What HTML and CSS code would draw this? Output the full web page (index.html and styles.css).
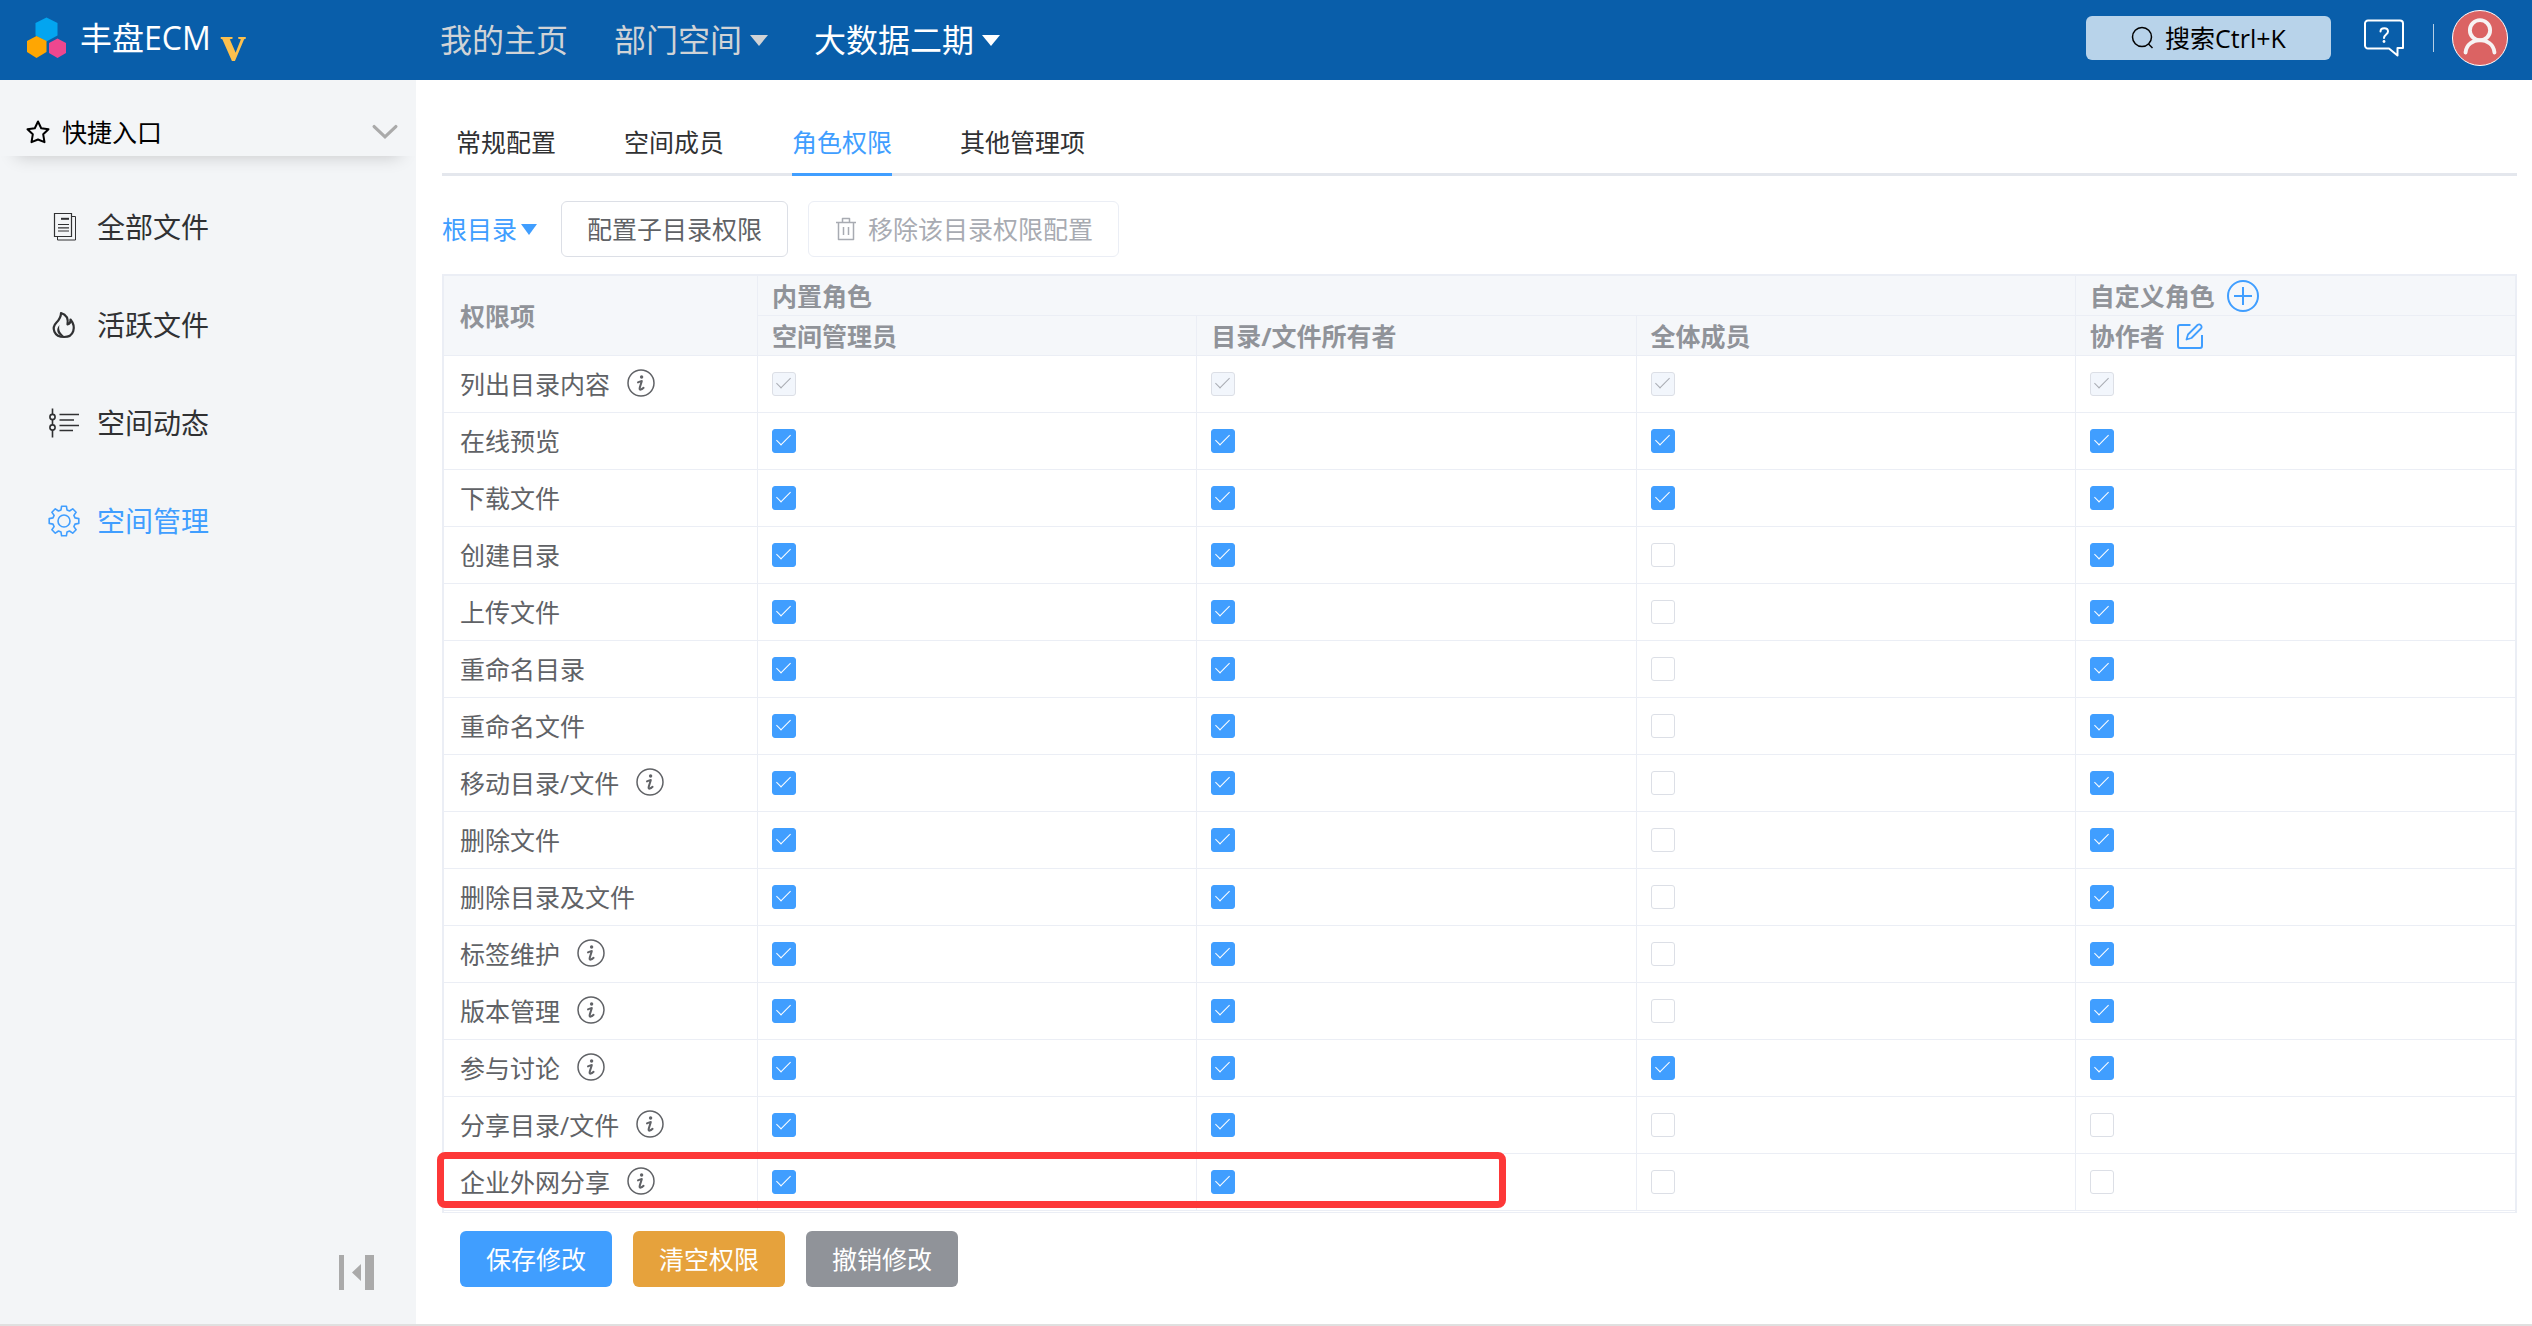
FILE: index.html
```html
<!DOCTYPE html>
<html lang="zh-CN">
<head>
  <meta charset="utf-8" />
  <meta name="viewport" content="width=device-width, initial-scale=1" />
  <title>丰盘ECM</title>
  <link rel="stylesheet" href="styles.css">
</head>

<body>
  <svg class="sprite" aria-hidden="true">
    <symbol id="i-info" viewBox="0 0 28 28">
      <circle cx="14" cy="14" r="13" fill="none" stroke="currentColor" stroke-width="1.5" />
      <circle cx="14.6" cy="8" r="1.7" fill="currentColor" />
      <path d="M11 13.4c1.6-.8 2.8-1.4 3.800-1.400-.4 2-2 5.400-2.200 7.600-.1 1.800 1.800 1.200 4-.8" fill="none" stroke="currentColor" stroke-width="2" stroke-linecap="round" stroke-linejoin="round" />
    </symbol>
  </svg>

  <header class="header">
    <a class="brand" href="#">
      <svg class="logo" viewBox="0 0 40 42" aria-hidden="true">
        <path fill="#03a5f0" d="M19.5.5l11 5.500v12.500l-11 6-11-6V6z" />
        <path fill="#ffa602" d="M9.500 19l10 5v11l-10 6L0 35V24z" />
        <path fill="#ee478f" d="M30.500 21.500L39 26v10l-8.500 5-8.500-5V26z" />
      </svg>
      <span>丰盘ECM</span>
      <span class="brand-v">v</span>
    </a>

    <nav class="top-nav">
      <a href="#">我的主页</a>
      <a href="#">部门空间<i class="caret"></i></a>
      <a class="active" href="#">大数据二期<i class="caret"></i></a>
    </nav>

    <div class="header-right">
      <button class="search" type="button">
        <svg viewBox="0 0 24 24" aria-hidden="true"><g fill="none" stroke="currentColor" stroke-width="1.5"><circle cx="11" cy="11" r="9.500" /><path d="M17.500 18l4 4" /></g></svg>
        <span>搜索Ctrl+K</span>
      </button>
      <button class="help" type="button" aria-label="帮助">
        <svg viewBox="0 0 40 38"><g fill="none" stroke="#fff" stroke-width="2" stroke-linejoin="round" stroke-linecap="round"><path d="M4 1.500h32a3 3 0 0 1 3 3V29h-5.500v7.500L25 29.500H4a3 3 0 0 1-3-3v-22a3 3 0 0 1 3-3z" /><path d="M16.500 12.500c0-4.500 7.500-4.500 7.500 0 0 3-4 3-4 6.500" /></g><circle cx="20" cy="22.500" r="1.400" fill="#fff" /></svg>
      </button>
      <span class="divider"></span>
      <button class="avatar" type="button" aria-label="账户">
        <svg viewBox="0 0 56 56"><g fill="none" stroke="#f7f3f3" stroke-width="4" stroke-linecap="round"><circle cx="28" cy="20" r="10.500" /><path d="M13 43c1.500-17 28.500-17 30 0" /></g></svg>
      </button>
    </div>
  </header>

  <div class="layout">
    <aside class="sidebar">
      <button class="quick" type="button">
        <svg class="star" viewBox="0 0 24 24" aria-hidden="true"><path d="m12 1.500 3.200 6.700 7.300 1-5.300 5.100 1.300 7.900-6.500-2.700-6.500 2.700 1.300-7.900L1.500 9.200l7.300-1z" fill="none" stroke="currentColor" stroke-width="2" stroke-linejoin="round" /></svg>
        <span>快捷入口</span>
        <svg class="chevron" viewBox="0 0 24 14" aria-hidden="true"><path d="m2 2 10 9.500L22 2" fill="none" stroke="currentColor" stroke-width="3" stroke-linecap="round" /></svg>
      </button>

      <nav class="side-nav">
        <a href="#">
          <svg viewBox="0 0 32 32" aria-hidden="true"><g fill="none" stroke="currentColor"><path d="M6.500 2.500h17v23h-17z" stroke-width="1.200" /><path d="M24 5.500h3.500V29h-18v-3" /><path d="M10 13.500h11M10 16.800h11M10 20h11" stroke-width="1.200" /><path d="M13 7.800h8" stroke-width="2" /></g></svg>
          <span>全部文件</span>
        </a>
        <a href="#">
          <svg viewBox="0 0 32 32" aria-hidden="true"><path d="M13 4c5 1.500 7.500 5.500 6.500 11.500 2-.5 3.200-2.200 3-5 6 7.500 3.500 17.500-6.500 17.500S3 19 8.500 13.500C11.500 10.500 13 8 13 4z" fill="none" stroke="currentColor" stroke-width="2.200" stroke-linejoin="round" /><path d="M11.500 16c-1.500 5 1.500 9 5 11.500-6 0-10-6-5-11.500z" fill="currentColor" /></svg>
          <span>活跃文件</span>
        </a>
        <a href="#">
          <svg viewBox="0 0 32 32" aria-hidden="true"><g fill="none" stroke="currentColor" stroke-width="1.600"><path d="M4.500 1.500v6M4.500 12.500v5.500M4.500 23v7.500" /><circle cx="4.500" cy="10" r="2.600" /><circle cx="4.500" cy="20.500" r="2.600" /><path d="M11.500 7.500H31M11.500 13H26M11.500 18.500H31M11.500 23.500H25" /></g></svg>
          <span>空间动态</span>
        </a>
        <a class="active" href="#">
          <svg viewBox="0 0 32 32" aria-hidden="true"><g fill="none" stroke="currentColor" stroke-width="1.600" stroke-linejoin="round"><circle cx="16" cy="16" r="6" /><path d="M13.600 1.200h4.800l.6 3.700 2.500 1.100 3.200-2.200 3.400 3.400-2.200 3.200 1.100 2.500 3.800.7v4.800l-3.800.7-1.100 2.500 2.200 3.200-3.400 3.400-3.200-2.200-2.500 1.100-.6 3.700h-4.800l-.6-3.700-2.500-1.100-3.200 2.200-3.400-3.400 2.200-3.200-1.100-2.500-3.800-.7v-4.800l3.800-.7 1.100-2.500-2.200-3.200 3.400-3.400 3.200 2.200 2.500-1.100z" /></g></svg>
          <span>空间管理</span>
        </a>
      </nav>

      <button class="collapse" type="button" aria-label="收起侧栏">
        <svg viewBox="0 0 36 36"><path fill="currentColor" d="M0 0h5v35H0zM26 0h9v35h-9zM22 9v17l-9-8.500z" /></svg>
      </button>
    </aside>

    <main class="content">
      <nav class="tabs">
        <a href="#">常规配置</a>
        <a href="#">空间成员</a>
        <a class="active" href="#">角色权限</a>
        <a href="#">其他管理项</a>
      </nav>

      <div class="toolbar">
        <a class="root-link" href="#">根目录<i class="caret"></i></a>
        <button class="btn" type="button">配置子目录权限</button>
        <button class="btn" type="button" disabled>
          <svg viewBox="0 0 24 24" aria-hidden="true"><path d="M2 5.500h20M8.500 5V1.500h7V5M4.500 5.500v17h15v-17M9.500 10v8M14.500 10v8" fill="none" stroke="currentColor" stroke-width="1.500" stroke-linejoin="round" /></svg>
          <span>移除该目录权限配置</span>
        </button>
      </div>

      <div class="table-wrap">
        <table class="perm-table">
          <thead>
            <tr>
              <th class="name-col" rowspan="2">权限项</th>
              <th colspan="3">内置角色</th>
              <th>
                <div class="th-row">自定义角色
                  <button class="icon-btn" type="button" aria-label="新增角色"><svg class="add" viewBox="0 0 32 32"><path d="M16 7v18M7 16h18M31 16a15 15 0 1 1-30 0 15 15 0 0 1 30 0z" fill="none" stroke="currentColor" stroke-width="2" /></svg></button>
                </div>
              </th>
            </tr>
            <tr>
              <th>空间管理员</th>
              <th>目录/文件所有者</th>
              <th>全体成员</th>
              <th>
                <div class="th-row">协作者
                  <button class="icon-btn" type="button" aria-label="编辑角色"><svg viewBox="0 0 26 26"><g fill="none" stroke="currentColor" stroke-width="2" stroke-linejoin="round"><path d="M13.500 2H3a2 2 0 0 0-2 2v19a2 2 0 0 0 2 2h20a2 2 0 0 0 2-2V12" /><path d="m9.500 16.500 1.500-5L20.500 2A2.500 2.500 0 0 1 24 5.500L14.500 15z" stroke-width="1.800" /></g></svg></button>
                </div>
              </th>
            </tr>
          </thead>
          <tbody>
            <tr>
              <td>列出目录内容<svg class="info"><use href="#i-info" /></svg></td>
              <td><input type="checkbox" aria-label="空间管理员 列出目录内容" checked disabled></td>
              <td><input type="checkbox" aria-label="所有者 列出目录内容" checked disabled></td>
              <td><input type="checkbox" aria-label="全体成员 列出目录内容" checked disabled></td>
              <td><input type="checkbox" aria-label="协作者 列出目录内容" checked disabled></td>
            </tr>
            <tr>
              <td>在线预览</td>
              <td><input type="checkbox" aria-label="空间管理员 在线预览" checked></td>
              <td><input type="checkbox" aria-label="所有者 在线预览" checked></td>
              <td><input type="checkbox" aria-label="全体成员 在线预览" checked></td>
              <td><input type="checkbox" aria-label="协作者 在线预览" checked></td>
            </tr>
            <tr>
              <td>下载文件</td>
              <td><input type="checkbox" aria-label="空间管理员 下载文件" checked></td>
              <td><input type="checkbox" aria-label="所有者 下载文件" checked></td>
              <td><input type="checkbox" aria-label="全体成员 下载文件" checked></td>
              <td><input type="checkbox" aria-label="协作者 下载文件" checked></td>
            </tr>
            <tr>
              <td>创建目录</td>
              <td><input type="checkbox" aria-label="空间管理员 创建目录" checked></td>
              <td><input type="checkbox" aria-label="所有者 创建目录" checked></td>
              <td><input type="checkbox" aria-label="全体成员 创建目录"></td>
              <td><input type="checkbox" aria-label="协作者 创建目录" checked></td>
            </tr>
            <tr>
              <td>上传文件</td>
              <td><input type="checkbox" aria-label="空间管理员 上传文件" checked></td>
              <td><input type="checkbox" aria-label="所有者 上传文件" checked></td>
              <td><input type="checkbox" aria-label="全体成员 上传文件"></td>
              <td><input type="checkbox" aria-label="协作者 上传文件" checked></td>
            </tr>
            <tr>
              <td>重命名目录</td>
              <td><input type="checkbox" aria-label="空间管理员 重命名目录" checked></td>
              <td><input type="checkbox" aria-label="所有者 重命名目录" checked></td>
              <td><input type="checkbox" aria-label="全体成员 重命名目录"></td>
              <td><input type="checkbox" aria-label="协作者 重命名目录" checked></td>
            </tr>
            <tr>
              <td>重命名文件</td>
              <td><input type="checkbox" aria-label="空间管理员 重命名文件" checked></td>
              <td><input type="checkbox" aria-label="所有者 重命名文件" checked></td>
              <td><input type="checkbox" aria-label="全体成员 重命名文件"></td>
              <td><input type="checkbox" aria-label="协作者 重命名文件" checked></td>
            </tr>
            <tr>
              <td>移动目录/文件<svg class="info"><use href="#i-info" /></svg></td>
              <td><input type="checkbox" aria-label="空间管理员 移动目录/文件" checked></td>
              <td><input type="checkbox" aria-label="所有者 移动目录/文件" checked></td>
              <td><input type="checkbox" aria-label="全体成员 移动目录/文件"></td>
              <td><input type="checkbox" aria-label="协作者 移动目录/文件" checked></td>
            </tr>
            <tr>
              <td>删除文件</td>
              <td><input type="checkbox" aria-label="空间管理员 删除文件" checked></td>
              <td><input type="checkbox" aria-label="所有者 删除文件" checked></td>
              <td><input type="checkbox" aria-label="全体成员 删除文件"></td>
              <td><input type="checkbox" aria-label="协作者 删除文件" checked></td>
            </tr>
            <tr>
              <td>删除目录及文件</td>
              <td><input type="checkbox" aria-label="空间管理员 删除目录及文件" checked></td>
              <td><input type="checkbox" aria-label="所有者 删除目录及文件" checked></td>
              <td><input type="checkbox" aria-label="全体成员 删除目录及文件"></td>
              <td><input type="checkbox" aria-label="协作者 删除目录及文件" checked></td>
            </tr>
            <tr>
              <td>标签维护<svg class="info"><use href="#i-info" /></svg></td>
              <td><input type="checkbox" aria-label="空间管理员 标签维护" checked></td>
              <td><input type="checkbox" aria-label="所有者 标签维护" checked></td>
              <td><input type="checkbox" aria-label="全体成员 标签维护"></td>
              <td><input type="checkbox" aria-label="协作者 标签维护" checked></td>
            </tr>
            <tr>
              <td>版本管理<svg class="info"><use href="#i-info" /></svg></td>
              <td><input type="checkbox" aria-label="空间管理员 版本管理" checked></td>
              <td><input type="checkbox" aria-label="所有者 版本管理" checked></td>
              <td><input type="checkbox" aria-label="全体成员 版本管理"></td>
              <td><input type="checkbox" aria-label="协作者 版本管理" checked></td>
            </tr>
            <tr>
              <td>参与讨论<svg class="info"><use href="#i-info" /></svg></td>
              <td><input type="checkbox" aria-label="空间管理员 参与讨论" checked></td>
              <td><input type="checkbox" aria-label="所有者 参与讨论" checked></td>
              <td><input type="checkbox" aria-label="全体成员 参与讨论" checked></td>
              <td><input type="checkbox" aria-label="协作者 参与讨论" checked></td>
            </tr>
            <tr>
              <td>分享目录/文件<svg class="info"><use href="#i-info" /></svg></td>
              <td><input type="checkbox" aria-label="空间管理员 分享目录/文件" checked></td>
              <td><input type="checkbox" aria-label="所有者 分享目录/文件" checked></td>
              <td><input type="checkbox" aria-label="全体成员 分享目录/文件"></td>
              <td><input type="checkbox" aria-label="协作者 分享目录/文件"></td>
            </tr>
            <tr>
              <td>企业外网分享<svg class="info"><use href="#i-info" /></svg></td>
              <td><input type="checkbox" aria-label="空间管理员 企业外网分享" checked></td>
              <td><input type="checkbox" aria-label="所有者 企业外网分享" checked></td>
              <td><input type="checkbox" aria-label="全体成员 企业外网分享"></td>
              <td><input type="checkbox" aria-label="协作者 企业外网分享"></td>
            </tr>
          </tbody>
        </table>
        <div class="highlight"></div>
      </div>

      <div class="actions">
        <button class="btn primary" type="button">保存修改</button>
        <button class="btn warning" type="button">清空权限</button>
        <button class="btn info-btn" type="button">撤销修改</button>
      </div>
    </main>
  </div>
</body>
</html>
```

FILE: styles.css
```css
* {
  box-sizing: border-box;
}

body {
  margin: 0;
  min-height: 100vh;
  display: flex;
  flex-direction: column;
  border-bottom: 2px solid #e0e0e0;
  background: #fff;
  color: #303133;
  font-family: "Open Sans", "Noto Sans CJK SC", sans-serif;
  font-size: 25px;
  line-height: 36px;
}

a {
  color: inherit;
  text-decoration: none;
}

button {
  margin: 0;
  padding: 0;
  border: 0;
  background: none;
  color: inherit;
  font: inherit;
  cursor: pointer;
}

svg {
  display: block;
  flex: none;
}

.sprite {
  display: none;
}

.caret {
  display: inline-block;
  border: 8px solid transparent;
  border-top: 11px solid currentColor;
  border-bottom: 0;
}

/* header */
.header {
  display: flex;
  align-items: center;
  height: 80px;
  padding: 0 24px 4px 27px;
  background: #095eaa;
  color: #fff;
  font-size: 32px;
}

.brand {
  display: flex;
  align-items: center;
  width: 413px;
}

.logo {
  width: 40px;
  height: 42px;
  margin-right: 13px;
}

.brand-v {
  margin-left: 10px;
  padding-top: 10px;
  color: #fdc04e;
  font-family: "Liberation Serif", serif;
  font-size: 50px;
  font-weight: bold;
}

.top-nav {
  display: flex;
  gap: 46px;
  padding-top: 4px;
  color: #d0d3d6;
}

.top-nav a {
  display: flex;
  align-items: center;
  gap: 8px;
}

.top-nav .caret {
  border-width: 11px 9px 0;
}

.top-nav .active {
  color: #fff;
}

.header-right {
  display: flex;
  align-items: center;
  margin-left: auto;
  font-size: 25px;
}

.search {
  display: flex;
  align-items: center;
  justify-content: center;
  gap: 10px;
  width: 245px;
  height: 44px;
  border-radius: 6px;
  background: #b8d3ea;
  color: #000;
}

.search svg {
  width: 24px;
  height: 24px;
}

.help {
  margin: 0 29px 0 33px;
}

.help svg {
  width: 40px;
  height: 38px;
}

.divider {
  width: 1px;
  height: 28px;
  margin-right: 18px;
  background: #b5cee5;
}

.avatar {
  width: 56px;
  height: 56px;
  border: 1px solid #fff;
  border-radius: 50%;
  background: #db6363;
}

/* sidebar */
.layout {
  display: flex;
  flex: 1;
}

.sidebar {
  display: flex;
  flex-direction: column;
  width: 416px;
  flex: none;
  background: #f3f5f7;
}

.quick {
  display: flex;
  align-items: center;
  height: 76px;
  padding: 28px 18px 0 26px;
  color: #000;
  box-shadow: 0 16px 18px -16px rgba(0, 0, 0, 0.2);
}

.star {
  width: 24px;
  height: 24px;
  margin-right: 12px;
}

.chevron {
  width: 26px;
  height: 16px;
  margin-left: auto;
  color: #aaa;
}

.side-nav {
  padding-top: 22px;
  font-size: 28px;
}

.side-nav a {
  display: flex;
  align-items: center;
  gap: 17px;
  height: 98px;
  padding-left: 48px;
}

.side-nav svg {
  width: 32px;
  height: 32px;
}

.side-nav .active {
  color: #409eff;
}

.collapse {
  margin: auto 41px 33px auto;
  color: #aaa;
}

.collapse svg {
  width: 36px;
  height: 36px;
}

/* content */
.content {
  flex: 1;
  min-width: 0;
  padding: 0 15px 0 26px;
}

.tabs {
  display: flex;
  gap: 68px;
  height: 96px;
  padding: 28px 14px 0;
  border-bottom: 3px solid #e4e7ed;
}

.tabs a {
  height: 68px;
  padding-top: 16px;
}

.tabs .active {
  border-bottom: 3px solid #409eff;
  color: #409eff;
}

.toolbar {
  display: flex;
  align-items: center;
  gap: 20px;
  padding: 25px 0 17px;
}

.root-link {
  display: flex;
  align-items: center;
  gap: 4px;
  padding-right: 4px;
  color: #409eff;
}

.btn {
  display: flex;
  align-items: center;
  gap: 10px;
  height: 56px;
  padding: 0 25px;
  border: 1px solid #dcdfe6;
  border-radius: 6px;
  background: #fff;
  color: #606266;
}

.btn svg {
  width: 24px;
  height: 24px;
}

.btn:disabled {
  border-color: #ebeef5;
  color: #a8abb2;
}

.table-wrap {
  position: relative;
  padding-bottom: 1px;
  border: 2px solid #ebeef5;
  border-bottom-width: 1px;
}

.perm-table {
  width: 100%;
  table-layout: fixed;
  border-collapse: separate;
  border-spacing: 0;
  color: #606266;
}

.perm-table th,
.perm-table td {
  padding: 0 14px;
  border-right: 1px solid #ebeef5;
  border-bottom: 1px solid #ebeef5;
  text-align: left;
}

.perm-table th {
  height: 40px;
  background: #f5f7fa;
  color: #909399;
}

.perm-table td {
  height: 57px;
}

.perm-table th:last-child,
.perm-table td:last-child {
  border-right: 0;
}

.perm-table .name-col {
  width: 314px;
}

.perm-table .name-col,
.perm-table td:first-child {
  padding-left: 16px;
}

.th-row {
  display: flex;
  align-items: center;
  gap: 12px;
}

.icon-btn {
  color: #409eff;
}

.icon-btn svg {
  width: 26px;
  height: 26px;
}

.icon-btn .add {
  width: 32px;
  height: 32px;
}

.info {
  display: inline-block;
  width: 28px;
  height: 28px;
  margin-left: 17px;
  vertical-align: -3px;
}

input[type="checkbox"] {
  appearance: none;
  position: relative;
  display: block;
  width: 24px;
  height: 24px;
  margin: 0;
  border: 1px solid #dcdfe6;
  border-radius: 3px;
  background: #fff;
}

input[type="checkbox"]:checked {
  border-color: #409eff;
  background: #409eff;
  color: #fff;
}

input[type="checkbox"]:checked:disabled {
  border-color: #dcdfe6;
  background: #f2f6fc;
  color: #a8abb2;
}

input[type="checkbox"]:checked::after {
  content: "";
  position: absolute;
  left: 7px;
  top: 1px;
  width: 6px;
  height: 13px;
  border-right: 1px solid currentColor;
  border-bottom: 1px solid currentColor;
  transform: rotate(45deg);
}

/* red frame over the last row */
.highlight {
  position: absolute;
  left: -7px;
  bottom: 4px;
  width: 1069px;
  height: 56px;
  border: 7px solid #fd3838;
  border-radius: 8px;
  pointer-events: none;
}

.actions {
  display: flex;
  gap: 21px;
  padding: 18px;
}

.actions .btn {
  border: 0;
  padding: 0 26px;
  color: #fff;
}

.actions .primary {
  background: #409eff;
}

.actions .warning {
  background: #e6a23c;
}

.actions .info-btn {
  background: #909399;
}
```
